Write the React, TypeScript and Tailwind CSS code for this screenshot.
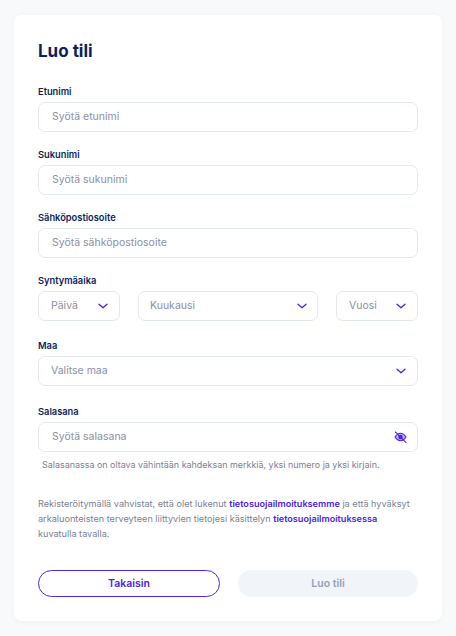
import { useState } from 'react';

function Chevron() {
  return (
    <svg width="10" height="10" viewBox="0 0 10 10" fill="none" className="shrink-0">
      <path d="M1 3.2 L5 6.8 L9 3.2" stroke="#4f23e8" strokeWidth="1.3" strokeLinecap="round" strokeLinejoin="round" />
    </svg>
  );
}

function EyeOff() {
  return (
    <svg width="13" height="13" viewBox="0 0 14 14" fill="none" className="block shrink-0">
      <path d="M1 6.5 C3 3.5 5 2.5 7 2.5 C9 2.5 11 3.5 13 6.5 C11 9.5 9 10.5 7 10.5 C5 10.5 3 9.5 1 6.5 Z" fill="#4f23e8" fillOpacity="0.35" stroke="#4f23e8" strokeWidth="1.1" />
      <circle cx="7" cy="6.5" r="2.4" fill="#4f23e8" />
      <path d="M1.5 1 L13 12.5" stroke="#4f23e8" strokeWidth="1.1" strokeLinecap="round" />
    </svg>
  );
}

function Label({ children }: { children: string }) {
  return <label className="block h-[18px] text-[9.3px] leading-[16px] font-semibold text-[#0b1f5c]">{children}</label>;
}

function TextField({ placeholder, type = 'text' }: { placeholder: string; type?: string }) {
  return (
    <input
      type={type}
      placeholder={placeholder}
      className="block h-[30px] w-full rounded-[7px] border border-[#e2e8f0] bg-white pb-[2px] pl-[13px] pr-3 text-[10.5px] outline-none placeholder:text-[#8a90a0]"
    />
  );
}

function SelectBox({ text, className, textClass = '-mt-px' }: { text: string; className: string; textClass?: string }) {
  return (
    <div className={`flex h-[30px] items-center justify-between rounded-[7px] border border-[#e2e8f0] bg-white text-[10.5px] text-[#8a90a0] ${className}`}>
      <span className={textClass}>{text}</span>
      <Chevron />
    </div>
  );
}

export default function App() {
  const [showPassword, setShowPassword] = useState(false);

  return (
    <div className="min-h-[636px] bg-[#f8f9fa] px-[14px] pt-[15px] pb-[15px] font-['Inter',sans-serif]">
      <form className="h-[606px] rounded-[8px] bg-white px-6 pt-[26px] shadow-[0_1px_6px_rgba(15,23,42,0.04)]">
        <h1 className="mb-[23px] text-[17px] leading-[20px] font-bold text-[#0b1f5c]">Luo tili</h1>

        <div className="mb-[15px]">
          <Label>Etunimi</Label>
          <TextField placeholder="Syötä etunimi" />
        </div>
        <div className="mb-[15px]">
          <Label>Sukunimi</Label>
          <TextField placeholder="Syötä sukunimi" />
        </div>
        <div className="mb-[15px]">
          <Label>Sähköpostiosoite</Label>
          <TextField placeholder="Syötä sähköpostiosoite" />
        </div>

        <div className="mb-[17px]">
          <Label>Syntymäaika</Label>
          <div className="flex gap-[18px]">
            <SelectBox text="Päivä" className="w-[82px] pl-3 pr-[11px]" />
            <SelectBox text="Kuukausi" className="flex-1 pl-[11px] pr-[10px]" />
            <SelectBox text="Vuosi" className="w-[82px] pl-3 pr-[11px]" />
          </div>
        </div>

        <div className="mb-[18px]">
          <Label>Maa</Label>
          <SelectBox text="Valitse maa" className="w-full pl-3 pr-[11px]" textClass="mt-0" />
        </div>

        <div>
          <Label>Salasana</Label>
          <div className="relative">
            <TextField placeholder="Syötä salasana" type={showPassword ? 'text' : 'password'} />
            <button
              type="button"
              aria-label="Näytä salasana"
              onClick={() => setShowPassword(!showPassword)}
              className="absolute top-[9px] right-[11px]"
            >
              <EyeOff />
            </button>
          </div>
          <p className="mt-[6px] pl-1 text-[8.95px] leading-[14px] text-[#7a8092]">
            Salasanassa on oltava vähintään kahdeksan merkkiä, yksi numero ja yksi kirjain.
          </p>
        </div>

        <p className="mt-[24px] text-[9.15px] leading-[15px] text-[#7a8092]">
          Rekisteröitymällä vahvistat, että olet lukenut <a href="#" className="font-semibold text-[#4f23e8]">tietosuojailmoituksemme</a> ja että hyväksyt arkaluonteisten terveyteen liittyvien tietojesi käsittelyn <a href="#" className="font-semibold text-[#4f23e8]">tietosuojailmoituksessa</a> kuvatulla tavalla.
        </p>

        <div className="mt-[29px] flex gap-[18px]">
          <button type="button" className="h-[27px] flex-1 rounded-full border border-[#4f23e8] bg-white text-[10.5px] font-semibold text-[#4f23e8]">
            Takaisin
          </button>
          <button type="button" disabled className="h-[27px] flex-1 rounded-full bg-[#f1f5f9] text-[10.5px] font-semibold text-[#94a0b4]">
            Luo tili
          </button>
        </div>
      </form>
    </div>
  );
}
